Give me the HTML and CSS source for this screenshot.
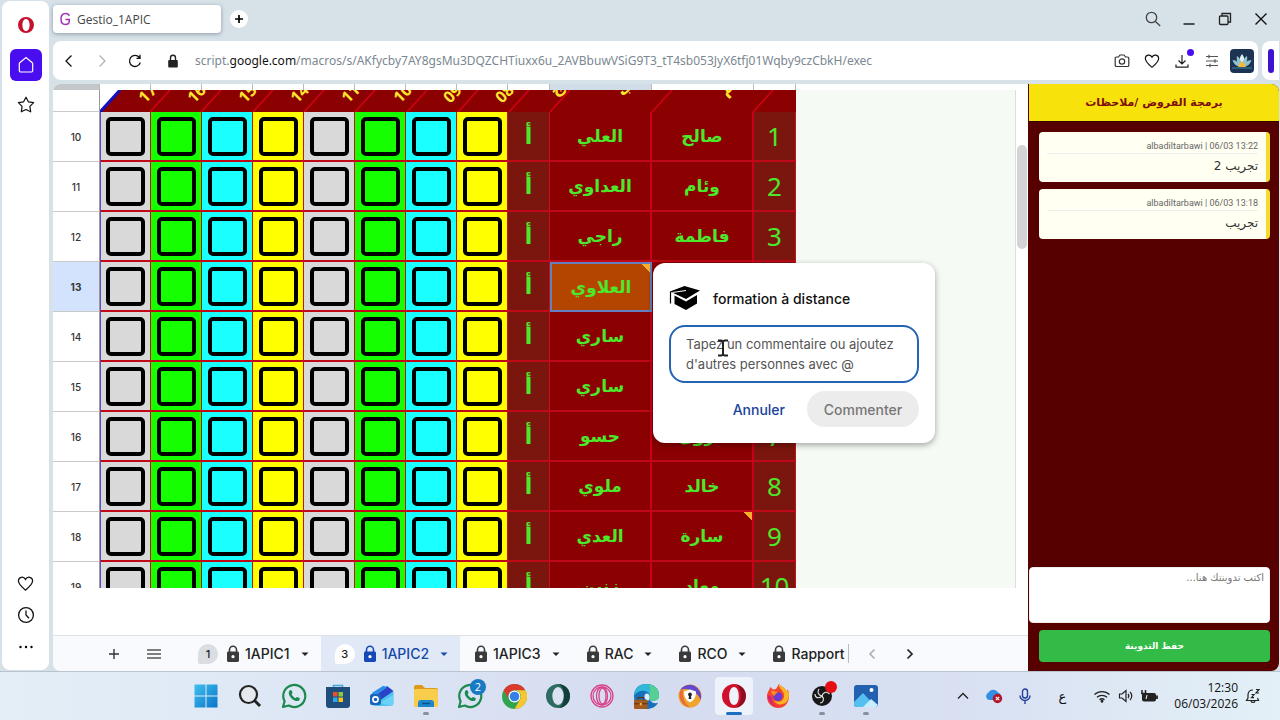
FILE: index.html
```html
<!DOCTYPE html>
<html lang="fr">
<head>
<meta charset="utf-8">
<title>Gestio_1APIC</title>
<link rel="stylesheet" href="styles.css">
</head>
<body>
<svg class="defs" aria-hidden="true">
  <symbol id="lock" viewBox="0 0 14 18"><path d="M3.500 7V4.800a3.500 3.500 0 0 1 7 0V7" fill="none" stroke="currentColor" stroke-width="1.600"/><rect x="1" y="6.500" width="12" height="10.500" rx="1.400" fill="currentColor"/><circle cx="7" cy="11.700" r="1.600" fill="#fff"/></symbol>
  <symbol id="caret" viewBox="0 0 10 10"><path d="M1.500 3.500h7L5 7z" fill="currentColor"/></symbol>
  <symbol id="heart" viewBox="0 0 18 18"><path d="M9 16C6 13.500 1.500 10 1.500 6.200 1.500 2 7 .8 9 4.700 11 .8 16.500 2 16.500 6.200 16.500 10 12 13.500 9 16z" fill="none" stroke="currentColor" stroke-width="1.300"/></symbol>
  <symbol id="whatsapp" viewBox="0 0 26 26"><path d="M2 24l1.600-5.800A11 11 0 1 1 7.800 22.500z" fill="none" stroke="#1c8a50" stroke-width="2.200" stroke-linejoin="round"/><path d="M8.600 7.500c.8-.9 1.700-.8 2.100.2l.8 1.900c.2.500-.9 1.500-.8 1.900.7 1.500 2.100 2.900 3.600 3.500.6.100 1.300-1.300 1.900-1.100l2.200 1.100c.8.400.3 1.800-.3 2.400-1.500 1.300-4 .7-6.300-1-3-2.200-5.400-6.200-3.200-8.900z" fill="#1c8a50"/></symbol>
</svg>

<div class="desktop">
<div class="browser">
  <nav class="rail" aria-label="Opera">
    <div class="rail-group">
      <button class="rail-btn" aria-label="Opera"><svg width="18" height="18" viewBox="0 0 18 18"><path fill-rule="evenodd" fill="#c8102e" d="M9 1a8 8 0 1 0 0 16A8 8 0 0 0 9 1zm0 2c2.200 0 3.600 2.600 3.600 6S11.200 15 9 15 5.400 12.400 5.400 9 6.800 3 9 3z"/></svg></button>
      <button class="rail-btn home" aria-label="Accueil"><svg width="18" height="18" viewBox="0 0 18 18"><path d="M9 1.500l6.300 5.200a1 1 0 0 1 .4.800v7a1.500 1.500 0 0 1-1.500 1.500H3.800a1.500 1.500 0 0 1-1.500-1.500v-7a1 1 0 0 1 .4-.8z" fill="none" stroke="#fff" stroke-width="1.200"/></svg></button>
      <button class="rail-btn" aria-label="Favoris"><svg width="18" height="18" viewBox="0 0 18 18"><path d="M9 1.200l2.400 4.600 5.200.9-3.700 3.700.8 5.400L9 13.500l-4.700 2.300.8-5.400L1.400 6.700l5.200-.9z" fill="none" stroke="#111" stroke-width="1.200" stroke-linejoin="round"/></svg></button>
    </div>
    <div class="rail-group">
      <button class="rail-btn" aria-label="Cœur"><svg width="17" height="17"><use href="#heart"/></svg></button>
      <button class="rail-btn" aria-label="Historique"><svg width="18" height="18" viewBox="0 0 18 18" fill="none" stroke="#111" stroke-width="1.300"><circle cx="9" cy="9" r="7.400"/><path d="M9 4.500V9l3 3.200"/></svg></button>
      <button class="rail-btn" aria-label="Plus"><svg width="16" height="6" viewBox="0 0 16 6"><circle cx="2.500" cy="3" r="1.200"/><circle cx="8" cy="3" r="1.200"/><circle cx="13.500" cy="3" r="1.200"/></svg></button>
    </div>
  </nav>

  <div class="window">
    <header class="tabstrip">
      <button class="tab"><svg width="12" height="14" viewBox="0 0 12 14"><path d="M10.300 3.800C9.800 2.200 8.300 1.500 6.500 1.500 3.800 1.500 2 3.300 2 7s1.800 5.500 4.300 5.500c2.600 0 4-1.300 4-3.500V7.500H6.500" fill="none" stroke="#a035b5" stroke-width="1.500"/></svg><span>Gestio_1APIC</span></button>
      <button class="newtab" aria-label="Nouvel onglet"><svg width="10" height="10" viewBox="0 0 10 10"><path d="M5 1v8M1 5h8" stroke="#000" stroke-width="1.700"/></svg></button>
      <div class="winbtns">
        <button aria-label="Rechercher"><svg width="16" height="16" viewBox="0 0 16 16" fill="none" stroke="#444" stroke-width="1.300"><circle cx="6.500" cy="6.500" r="5.200"/><path d="M10.500 10.500l4.700 4.500"/></svg></button>
        <button aria-label="Réduire"><svg width="14" height="14" viewBox="0 0 14 14"><path d="M1.500 12h11" stroke="#111" stroke-width="1.400"/></svg></button>
        <button aria-label="Restaurer"><svg width="14" height="14" viewBox="0 0 14 14" fill="none" stroke="#222" stroke-width="1.300"><rect x="1.500" y="4" width="8.500" height="8.500" rx="1"/><path d="M4 4V1.500h8.500V10H10"/></svg></button>
        <button aria-label="Fermer"><svg width="14" height="14" viewBox="0 0 14 14"><path d="M1.500 1.500l11 11M12.500 1.500l-11 11" stroke="#111" stroke-width="1.400"/></svg></button>
      </div>
    </header>

    <div class="toolbar">
      <div class="address">
        <button aria-label="Précédent"><svg width="14" height="14" viewBox="0 0 14 14"><path d="M9.500 1.500L4 7l5.500 5.500" fill="none" stroke="#111" stroke-width="1.300"/></svg></button>
        <button aria-label="Suivant"><svg width="14" height="14" viewBox="0 0 14 14"><path d="M4.500 1.500L10 7l-5.500 5.500" fill="none" stroke="#b0b0b0" stroke-width="1.200"/></svg></button>
        <button aria-label="Actualiser"><svg width="14" height="14" viewBox="0 0 14 14"><path d="M12.300 8.500A5.500 5.500 0 1 1 11.300 3.500M12 .8v3.600H8.500" fill="none" stroke="#111" stroke-width="1.300"/></svg></button>
        <svg class="secure" width="12" height="14" viewBox="0 0 12 14"><path d="M3.500 6V3.800a2.500 2.500 0 0 1 5 0V6" fill="none" stroke="#222" stroke-width="1.400"/><rect x="1.200" y="6" width="9.600" height="7.500" rx="1" fill="#222"/></svg>
        <span class="url">script.<b>google.com</b>/macros/s/AKfycby7AY8gsMu3DQZCHTiuxx6u_2AVBbuwVSiG9T3_tT4sb053JyX6tfj01Wqby9czCbkH/exec</span>
        <button aria-label="Capture"><svg width="16" height="16" viewBox="0 0 16 16" fill="none" stroke="#333" stroke-width="1.200"><path d="M2.500 4h2L6 2h4l1.500 2h2a1.300 1.300 0 0 1 1.300 1.300v6.900a1.300 1.300 0 0 1-1.300 1.300h-11a1.300 1.300 0 0 1-1.300-1.300V5.300A1.300 1.300 0 0 1 2.500 4z"/><circle cx="8" cy="8.500" r="2.700"/></svg></button>
        <button aria-label="Aimer"><svg width="16" height="16"><use href="#heart"/></svg></button>
        <button class="download" aria-label="Téléchargements"><svg width="14" height="14" viewBox="0 0 14 14" fill="none" stroke="#222" stroke-width="1.200"><path d="M7 1v8.500M3.500 6.500L7 10l3.500-3.500M1 10.500v2.700h12v-2.700"/></svg></button>
        <button aria-label="Réglages"><svg width="14" height="14" viewBox="0 0 14 14" stroke="#555" stroke-width="1.200"><path d="M1 2.500h12M1 7h12M1 11.500h12M4 .8v3.400M10 5.300v3.400M5 9.800v3.400"/></svg></button>
        <button aria-label="Profil"><svg width="24" height="24" viewBox="0 0 24 24"><rect width="24" height="24" rx="4" fill="#1d3354"/><path d="M12 5c3 4 3 7 0 12-3-5-3-8 0-12z" fill="#dff0f5"/><path d="M7 7c3 2 5 6 5 11-4-2-6-6-5-11zM17 7c-3 2-5 6-5 11 4-2 6-6 5-11z" fill="#8fc3cf"/><path d="M2.500 11c4 0 7 3 9.500 7-4 0-8-2-9.500-7zM21.500 11c-4 0-7 3-9.500 7 4 0 8-2 9.500-7z" fill="#8fc3d0"/><path d="M12 12c2 2 3 3 4 6H8c1-3 2-4 4-6z" fill="#f0b83c"/><path d="M2 19h20" stroke="#3f86a0"/></svg></button>
      </div>
      <div class="handle"><span></span></div>
    </div>

    <div class="page">
      <main class="sheet">
        <div class="viewport">
          <table class="grid">
            <colgroup><col class="c-num"><col class="c-box" span="8"><col class="c-grp"><col class="c-name" span="2"><col class="c-idx"></colgroup>
            <thead>
              <tr class="letters"><th class="corner"></th><th></th><th></th><th></th><th></th><th></th><th></th><th></th><th></th><th></th><th class="on"></th><th></th><th></th></tr>
              <tr class="hours"><th class="rownum"></th><th colspan="12">
                <svg width="696" height="22" viewBox="0 0 696 22">
                  <path d="M0 22L20 0H696V22z" fill="#8b0000"/>
                  <path d="M0 22L20 0" stroke="#1010c8" stroke-width="3"/>
                  <path d="M50 22l20-22M101 22l20-22M153 22l20-22M204 22l20-22M255 22l20-22M307 22l20-22M358 22l20-22M409 22l20-22M450 22l20-22M552 22l20-22M653 22l20-22" stroke="#d40018" stroke-width="1.500"/>
                  <g class="slant">
                    <text transform="translate(45 14) rotate(-45)">17</text>
                    <text transform="translate(94 14) rotate(-45)">16</text>
                    <text transform="translate(145 14) rotate(-45)">15</text>
                    <text transform="translate(197 14) rotate(-45)">14</text>
                    <text transform="translate(248 14) rotate(-45)">11</text>
                    <text transform="translate(300 14) rotate(-45)">10</text>
                    <text transform="translate(350 14) rotate(-45)">09</text>
                    <text transform="translate(402 14) rotate(-45)">08</text>
                    <text transform="translate(456 7) rotate(-45)">ج</text>
                    <text transform="translate(523 7) rotate(-45)">ب</text>
                    <text transform="translate(626 7) rotate(-45)">م</text>
                  </g>
                </svg></th></tr>
            </thead>
            <tbody id="rows"></tbody>
          </table>
          <div class="blank"></div>
          <div class="scroll"><span></span></div>
        </div>
        <footer class="sheetbar">
          <button class="tool" aria-label="Ajouter une feuille"><svg width="12" height="12" viewBox="0 0 12 12"><path d="M6 1v10M1 6h10" stroke="#333" stroke-width="1.400"/></svg></button>
          <button class="tool" aria-label="Toutes les feuilles"><svg width="14" height="12" viewBox="0 0 14 12"><path d="M0 2h14M0 6h14M0 10h14" stroke="#555" stroke-width="1.500"/></svg></button>
          <div class="sheets">
            <button><span class="count">1</span><svg class="lk"><use href="#lock"/></svg>1APIC1<svg class="ct"><use href="#caret"/></svg></button>
            <button class="active"><span class="count">3</span><svg class="lk"><use href="#lock"/></svg>1APIC2<svg class="ct"><use href="#caret"/></svg></button>
            <button><svg class="lk"><use href="#lock"/></svg>1APIC3<svg class="ct"><use href="#caret"/></svg></button>
            <button><svg class="lk"><use href="#lock"/></svg>RAC<svg class="ct"><use href="#caret"/></svg></button>
            <button><svg class="lk"><use href="#lock"/></svg>RCO<svg class="ct"><use href="#caret"/></svg></button>
            <button class="last"><svg class="lk"><use href="#lock"/></svg>Rapport</button>
          </div>
          <div class="pager">
            <button aria-label="Feuilles précédentes"><svg width="10" height="12" viewBox="0 0 10 12"><path d="M7.500 1.500L3 6l4.500 4.500" fill="none" stroke="#aaa" stroke-width="1.500"/></svg></button>
            <button aria-label="Feuilles suivantes"><svg width="10" height="12" viewBox="0 0 10 12"><path d="M2.500 1.500L7 6l-4.500 4.500" fill="none" stroke="#222" stroke-width="1.700"/></svg></button>
          </div>
        </footer>

        <form class="comment">
          <div class="who"><svg width="32" height="26" viewBox="0 0 32 26"><path d="M1 6.500L15.500 1 31 5.500 17 14z"/><path d="M5.500 10.500l11.500 6L28 10v8.500L17 25 5.500 19z"/><path d="M17 5.500L3.500 7.500" stroke="#fff"/><path d="M1.500 6.500v12" stroke="#000" stroke-width="1.200"/></svg><label for="msg">formation à distance</label></div>
          <textarea id="msg" rows="2" placeholder="Tapez un commentaire ou ajoutez d'autres personnes avec @"></textarea>
          <div class="actions"><button type="button" class="cancel">Annuler</button><button type="button" class="send" disabled>Commenter</button></div>
          <svg class="cursor" width="12" height="18" viewBox="0 0 12 18"><path d="M1 1.500h3.500L6 2.500l1.500-1H11M6 2v14M1 16.500h3.500l1.500-1 1.500 1H11" fill="none" stroke="#222" stroke-width="2"/></svg>
        </form>
      </main>

      <aside class="notes" dir="rtl" lang="ar">
        <h1>برمجة الفروض /ملاحظات</h1>
        <div class="list">
          <article><p class="meta" dir="ltr">albadiltarbawi | 06/03 13:22</p><p class="body">تجريب 2</p></article>
          <article><p class="meta" dir="ltr">albadiltarbawi | 06/03 13:18</p><p class="body">تجريب</p></article>
        </div>
        <textarea aria-label="تدوينة" placeholder="اكتب تدوينتك هنا..."></textarea>
        <button class="save">حفظ التدوينة</button>
      </aside>
    </div>
  </div>
</div>

<footer class="taskbar">
  <nav class="apps" aria-label="Applications">
    <button aria-label="Démarrer"><svg width="24" height="24" viewBox="0 0 24 24"><defs><linearGradient id="win" x2="1" y2="1"><stop stop-color="#3fc0f0"/><stop offset="1" stop-color="#0a74c8"/></linearGradient></defs><path d="M.500.500h11v11H.500zM12.500.500h11v11h-11zM.500 12.500h11v11H.500zM12.500 12.500h11v11h-11z" fill="url(#win)"/></svg></button>
    <button aria-label="Recherche"><svg width="24" height="24" viewBox="0 0 24 24" fill="none" stroke="#222"><circle cx="10.500" cy="10.500" r="8.500" stroke-width="2.200" fill="#e4e9f0"/><path d="M16.500 16.500l5.500 5.500" stroke-width="3"/></svg></button>
    <button aria-label="WhatsApp"><svg width="26" height="26"><use href="#whatsapp"/></svg></button>
    <button aria-label="Store"><svg width="24" height="24" viewBox="0 0 24 24"><path d="M7.500 4V1.500h9V4" fill="none" stroke="#3aa7dd" stroke-width="1.500"/><path d="M0 3h24v18a3 3 0 0 1-3 3H3a3 3 0 0 1-3-3z" fill="#1f4e7c"/><path d="M7 8h4.500v4.500H7z" fill="#e8502e"/><path d="M12.500 8H17v4.500h-4.500z" fill="#8cc63f"/><path d="M7 13.500h4.500V18H7z" fill="#2aa9e8"/><path d="M12.500 13.500H17V18h-4.500z" fill="#fbc31b"/></svg></button>
    <button aria-label="Outlook"><svg width="24" height="24" viewBox="0 0 24 24"><path d="M2 9L14 1.500 23.500 8v11a3 3 0 0 1-3 3H5a3 3 0 0 1-3-3z" fill="#4cc2ee"/><path d="M8 9L17 2l6.500 5-13 9z" fill="#2b42c8"/><path d="M2 9l11-7 4 1.500L5 12z" fill="#2f8de8"/><path d="M10 19l13-8v8.500a2.500 2.500 0 0 1-2.500 2.500z" fill="#6ad3f7"/><rect y="10" width="11" height="11" rx="2" fill="#1764b8"/><circle cx="5.500" cy="15.500" r="2.600" fill="none" stroke="#fff" stroke-width="1.600"/></svg></button>
    <button class="run" aria-label="Explorateur"><svg width="26" height="24" viewBox="0 0 26 24"><path d="M1 3a2 2 0 0 1 2-2h6l3 3h11a2 2 0 0 1 2 2v4H1z" fill="#dc9a1a"/><rect x="1" y="5" width="24" height="18" rx="1.500" fill="#f8cd4c"/><path d="M5 23v-4a3 3 0 0 1 3-3h10a3 3 0 0 1 3 3v4z" fill="#1f86cc"/><path d="M9 19.500h8" stroke="#0b528a" stroke-width="1.500"/></svg></button>
    <button aria-label="WhatsApp, 2"><svg width="26" height="26"><use href="#whatsapp"/></svg><span class="badge">2</span></button>
    <button aria-label="Chrome"><svg width="25" height="25" viewBox="0 0 24 24"><circle cx="12" cy="12" r="12" fill="#2fa44f"/><path d="M1.600 6A12 12 0 0 1 22.400 6H12a6 6 0 0 0-5.200 9z" fill="#dc3a2e"/><path d="M22.400 6A12 12 0 0 1 12 24l5.200-9A6 6 0 0 0 12 6z" fill="#f9c62c"/><circle cx="12" cy="12" r="5.700" fill="#fff"/><circle cx="12" cy="12" r="4.600" fill="#347fe8"/></svg></button>
    <button aria-label="Opera Air"><svg width="24" height="24" viewBox="0 0 24 24"><circle cx="12" cy="12" r="12" fill="#2e6b61"/><path d="M12 0a12 12 0 0 1 0 24c4-1 6-6 6-12S16 1 12 0z" fill="#143e3b"/><ellipse cx="12" cy="12" rx="5.700" ry="9" fill="#dce2f2"/></svg></button>
    <button aria-label="Opera GX"><svg width="24" height="24" viewBox="0 0 24 24" fill="none" stroke="#d8438c" stroke-width="1.300"><circle cx="12" cy="12" r="11"/><circle cx="12" cy="12" r="9"/><ellipse cx="12" cy="12" rx="5.500" ry="9"/><ellipse cx="12.500" cy="12" rx="3.500" ry="8"/></svg></button>
    <button aria-label="Edge"><svg width="25" height="25" viewBox="0 0 24 24"><path d="M0 12C0 4 5 0 12 0c8 0 12 5 12 11 0 5-6 6-9 4 2 3 5 4 8 3-2 4-6 6-11 6C5 24 0 19 0 12z" fill="#1670bd"/><path d="M0 11C1 3 6 0 12 0c8 0 12 5 12 11 0 5-6 6-9 4-.8-1 1-2 0-5C13 5 4 5 0 11z" fill="#32b7d8"/><path d="M14 .2C20 1 24 5 24 11c0 5-6 6-9 4-.8-1 1-2 0-5 0-3 2-6-1-9.800z" fill="#55cf92"/><path d="M12 9c2 0 3 1.500 3 3.500s-1 2.500-1 3.500c-2 0-4-1.500-4-4 0-1.500 1-3 2-3z" fill="#e3ecf6"/><rect y="15" width="13" height="9" rx="1" fill="#a25a1e"/><path d="M4 15v-2h5v2M0 19h13" fill="none" stroke="#5f3008"/><path d="M5.500 18h2v2.500h-2z" fill="#f5b04d"/></svg></button>
    <button aria-label="Navigateur privé"><svg width="24" height="24" viewBox="0 0 24 24"><circle cx="12" cy="12" r="11.500" fill="#f0a42b"/><path d="M2 6A11.500 11.500 0 0 1 22.500 16C20 8 10 3 2 6z" fill="#6547cf"/><path d="M2 7C0 14 4 22 12 23.500 7 20 4 14 5 6z" fill="#e96a3c"/><path d="M12 5.500l6 2c0 5-1.500 8.500-6 11-4.500-2.500-6-6-6-11z" fill="#fff"/><circle cx="12" cy="10.500" r="1.900" fill="#222"/><path d="M11.200 11h1.600l.6 4h-2.800z" fill="#222"/></svg></button>
    <button class="run current" aria-label="Opera"><svg width="24" height="24" viewBox="0 0 24 24"><path fill-rule="evenodd" fill="#d0112b" d="M12 0a12 12 0 1 0 0 24 12 12 0 0 0 0-24zm0 3c3 0 4.800 4 4.800 9s-1.800 9-4.800 9-4.800-4-4.800-9S9 3 12 3z"/><path d="M14 .2a12 12 0 0 1 0 23.600c3-2 5-6 5-11.800s-2-9.800-5-11.800z" fill="#8c0d22"/></svg></button>
    <button aria-label="Firefox"><svg width="24" height="24" viewBox="0 0 24 24"><path d="M3 6l1.500-3L7 5.500 10 5l3-5c2 3 6 3 7 7l2-1c3 7 0 18-10 18C3 24-2 14 3 6z" fill="#f4442f"/><path d="M13 0c-1 5 6 6 5 13-1 5-7 6-10 3 2 7 15 6 15-5 0-5-4-5-5-7-1-1-4-2-5-4z" fill="#fbb522"/><path d="M1.500 11c1 8 6 12 12 12-6-1-8-5-8-10z" fill="#d51d7d"/><circle cx="11.800" cy="12.500" r="4.500" fill="#6c3bd1"/><path d="M5 7c3-1 5 1 7 1-1 2-3 1-3 4-2-1-4-2-4-5z" fill="#fb8b24"/></svg></button>
    <button class="run" aria-label="OBS Studio"><svg width="20" height="20" viewBox="0 0 20 20"><circle cx="10" cy="10" r="10" fill="#181818"/><g fill="none" stroke="#ddd" stroke-width="1.200"><path d="M10 10C6 9 5 6 7 3M10 10c1-4 5-5 7.500-2M10 10c3 3 1 7-2 7M10 10c-3 3-7 2-7-2"/></g></svg><span class="rec"></span></button>
    <button class="run" aria-label="Photos"><svg width="24" height="24" viewBox="0 0 24 24"><rect y="1" width="24" height="22" rx="3" fill="#2161b0"/><path d="M0 18l9-9 13 14H3a3 3 0 0 1-3-3z" fill="#55bff0"/><path d="M9 23l8-8 7 6a3 3 0 0 1-3 2z" fill="#c8eefb"/><circle cx="17.500" cy="6" r="2" fill="#fff"/></svg></button>
  </nav>
  <div class="tray">
    <button aria-label="Icônes masquées"><svg width="12" height="8" viewBox="0 0 12 8"><path d="M1 6.500l5-5 5 5" fill="none" stroke="#222" stroke-width="1.300"/></svg></button>
    <button aria-label="OneDrive"><svg width="18" height="16" viewBox="0 0 18 16"><path d="M4 12a4 4 0 0 1-.5-7.500A5.500 5.500 0 0 1 13 4.500 4 4 0 0 1 14 12z" fill="#2f8fe6"/><circle cx="12.500" cy="10.500" r="4.700" fill="#b41427"/><path d="M10.800 8.800l3.400 3.400M14.200 8.800l-3.400 3.400" stroke="#fff" stroke-width="1.200"/></svg></button>
    <button aria-label="Micro"><svg width="12" height="17" viewBox="0 0 12 17" fill="none" stroke="#263f9b" stroke-width="1.400"><rect x="3.500" y="1" width="5" height="9" rx="2.500"/><path d="M1 7.500a5 5 0 0 0 10 0M6 12.500V16"/></svg></button>
    <span class="lang">ع</span>
    <button aria-label="Wi-Fi"><svg width="18" height="14" viewBox="0 0 18 14" fill="none" stroke="#222" stroke-width="1.300"><path d="M1.500 5.500a11 11 0 0 1 15 0M4 8.300a7.300 7.300 0 0 1 10 0M6.500 10.800a3.800 3.800 0 0 1 5 0"/><circle cx="9" cy="12.200" r=".8" fill="#222"/></svg></button>
    <button aria-label="Volume"><svg width="16" height="14" viewBox="0 0 16 14" fill="none" stroke="#222" stroke-width="1.200"><path d="M1.500 5h2.500l4-3.500v11L4 9H1.500zM10 5a3 3 0 0 1 0 4M12 3a5.500 5.500 0 0 1 0 8"/></svg></button>
    <button aria-label="Batterie"><svg width="18" height="14" viewBox="0 0 18 14"><rect x="1" y="4" width="14" height="8.500" rx="2" fill="#222"/><path d="M16 6.500v3.500" stroke="#222" stroke-width="1.800"/><path d="M1 1v3M4.500 1v3M0 4.500h6" stroke="#222" stroke-width="1.500"/><path d="M6 6l-1 4" stroke="#fff"/></svg></button>
    <div class="clock"><span>12:30</span><span>06/03/2026</span></div>
    <button aria-label="Notifications"><svg width="16" height="16" viewBox="0 0 16 16" fill="none" stroke="#222" stroke-width="1.200"><path d="M8 2C4.500 2 3 4 3 7v3l-1.500 2.500h12L12.500 10M6 13c.5 2 3.500 2 4 0M6.500 6.500H9l-2.500 3.200H9M11 1.500h3L11 5h3"/></svg></button>
  </div>
</footer>
</div>
<script src="app.js"></script>
</body>
</html>
```
FILE: styles.css
```css
* { box-sizing: border-box; }
body { margin: 0; font-family: "Open Sans", "Noto Sans", sans-serif; color: #111; }
button { border: 0; padding: 0; background: none; font: inherit; color: inherit; display: flex; align-items: center; justify-content: center; }
svg { display: block; flex: none; }
p, h1 { margin: 0; }
textarea { resize: none; }
.defs { position: absolute; width: 0; height: 0; }

.desktop { height: 100vh; display: flex; flex-direction: column; overflow: hidden; }
.browser { flex: 1; min-height: 0; display: flex; gap: 4px; padding: 0 1px 0 2px; background: #d6e1e8; border-bottom: 1px solid #b9c4d0; }

.rail { width: 47px; margin: 1px 0; padding: 8px 0 7px; display: flex; flex-direction: column; justify-content: space-between; background: #fff; border-radius: 8px; }
.rail-group { display: flex; flex-direction: column; align-items: center; gap: 8px; }
.rail-group + .rail-group { gap: 0; }
.rail-btn { width: 32px; height: 32px; }
.rail-btn.home { background: #4a0df0; border-radius: 6px; }

.window { flex: 1; min-width: 0; display: flex; flex-direction: column; }
.tabstrip { height: 41px; padding: 5px 8px 8px 0; display: flex; align-items: center; gap: 9px; }
.tab { width: 168px; height: 28px; padding: 0 6px; gap: 6px; justify-content: flex-start; background: #fff; border-radius: 4px; box-shadow: 0 1px 4px #8d9aa4; font-size: 12px; color: #444; }
.newtab { width: 18px; height: 18px; background: #fff; border-radius: 50%; }
.winbtns { margin-left: auto; display: flex; gap: 16px; }
.winbtns button { width: 20px; height: 20px; }

.toolbar { height: 39px; display: flex; gap: 4px; }
.address { flex: 1; min-width: 0; padding: 0 4px 0 6px; display: flex; align-items: center; gap: 10px; background: #fff; border-radius: 8px; }
.address button { width: 20px; height: 24px; }
.address button:nth-of-type(2), .address button:nth-of-type(3) { margin-left: 3px; }
.secure { margin: 0 6px 0 12px; }
.url { flex: 1; font-family: "Noto Sans", sans-serif; font-size: 12px; color: #7b8791; white-space: nowrap; overflow: hidden; }
.url b { font-weight: 400; color: #111; }
.address button:last-child { width: 24px; margin-left: -2px; }
.download { position: relative; }
.download::after { content: ""; position: absolute; top: 0; right: -2px; width: 7px; height: 7px; border-radius: 50%; background: #4a0df0; }
.handle { width: 17px; display: flex; align-items: center; justify-content: center; background: #fff; border-radius: 8px 0 0 8px; }
.handle span { width: 6px; height: 24px; border-radius: 3px; background: #3d12d0; }

.page { flex: 1; min-height: 0; margin-top: 4px; display: flex; background: #fff; border-radius: 8px; overflow: hidden; }
.sheet { flex: 1; min-width: 0; position: relative; display: flex; flex-direction: column; font-family: Inter, "DejaVu Sans", sans-serif; }
.viewport { flex: 1; min-height: 0; margin-bottom: 47px; display: flex; overflow: hidden; }
.blank { flex: 1; margin-top: 6px; background: #f5faf5; border-right: 1px solid #ddd; }
.scroll { width: 12px; padding-top: 61px; }
.scroll span { display: block; width: 10px; height: 104px; margin: 0 auto; border-radius: 5px; background: #d4d4d6; }

.grid { width: 743px; flex: none; table-layout: fixed; border-collapse: separate; border-spacing: 0; align-self: flex-start; }
.grid th, .grid td { padding: 0; overflow: hidden; }
.c-num { width: 47px; }
.c-box { width: 51px; }
.c-grp { width: 42px; }
.c-name { width: 102px; }
.c-idx { width: 42px; }
.letters th { height: 6px; border-right: 1px solid #bbb; background: #fff; }
.letters .corner { background: #c4c7c9; }
.letters .on { background: #d0dce8; }
.hours th { height: 22px; }
.rownum { border-right: 1px solid #999; border-bottom: 1px solid #c9c9c9; background: #fff; font-size: 10px; font-weight: 500; color: #333; text-align: center; }
.rownum.on { background: #d3e3fd; font-weight: 700; }
.slant { font: bold 16px "Open Sans", "DejaVu Sans", sans-serif; fill: #ffe62e; }
#rows tr { height: 50px; }
#rows td { border-right: 1px solid #c8101c; border-bottom: 2px solid #c00818; background: #8b0000; text-align: center; vertical-align: middle; }
#rows .gray { background: #d9d9d9; }
#rows .green { background: #15ff00; }
#rows .cyan { background: #1affff; }
#rows .yellow { background: #ffff00; }
#rows .gray:nth-child(2) { border-left: 1px solid #5a50d0; }
.grid input { appearance: none; display: block; width: 39px; height: 39px; margin: 0 auto; border: 4px solid #000; border-radius: 5px; }
#rows .grp, #rows .idx { background: #7b160e; }
.grp, .name { font: bold 17px "DejaVu Sans", sans-serif; color: #4be82c; }
.grp { font-size: 22px; }
#rows .name { border-right: 2px solid #c8001a; }
#rows .selected { background: #b44500; border: 2px solid #6580c0; }
.idx { font-family: "Noto Sans", sans-serif; font-size: 26px; color: #4be82c; }
.noted { background-image: linear-gradient(225deg, #f3ae2c 6px, transparent 6px) !important; }

.sheetbar { height: 36px; padding-left: 51px; display: flex; background: #f8fafd; border-top: 1px solid #dde2e6; font-size: 14px; font-weight: 500; color: #222; }
.tool { width: 20px; margin-right: 20px; }
.sheets { flex: none; display: flex; }
.sheets button { padding: 0 11px 0 14px; }
.sheets .active { background: #e1e9f7; color: #1649a8; }
.sheets .last { padding-right: 3px; border-right: 1px solid #bbb; margin: 8px 0; }
.lk { width: 14px; height: 18px; margin-right: 5px; color: #3a3a3a; }
.active .lk { color: #1649b8; }
.ct { width: 10px; height: 10px; margin-left: 10px; }
.count { width: 20px; height: 20px; margin-right: 8px; line-height: 20px; font-size: 11px; color: #222; background: #dadde1; border-radius: 50% 50% 50% 2px; }
.active .count { background: #fff; }
.pager { display: flex; margin-left: 13px; gap: 18px; }
.pager button { width: 20px; }

.comment { position: absolute; left: 600px; top: 179px; width: 282px; padding: 16px; background: #fff; border-radius: 12px; box-shadow: 0 2px 6px rgba(0, 0, 0, .35); font-size: 14px; }
.who { height: 38px; display: flex; align-items: center; gap: 12px; font-weight: 500; }
.comment textarea { display: block; width: 100%; height: 58px; margin: 8px 0; padding: 7px 15px; border: 2px solid #2563b5; border-radius: 16px; outline: 0; overflow: hidden; background: #fff; font: 13px/20px Inter, sans-serif; }
.comment textarea::placeholder { color: #555; }
.actions { display: flex; justify-content: flex-end; gap: 22px; font-weight: 500; }
.cancel { color: #17439b; }
.send { width: 112px; height: 36px; border-radius: 18px; background: #ececec; color: #777; }
.cursor { position: absolute; left: 64px; top: 76px; }

.notes { width: 251px; display: flex; flex-direction: column; background: #570000; border-left: 1px solid #570000; }
.notes h1 { height: 38px; text-align: center; background: #f8e20c; color: #7d0f0a; font: bold 11px/38px "DejaVu Sans", sans-serif; border-bottom: 1px solid #300; }
.list { flex: 1; padding: 10px 9px 10px 10px; display: flex; flex-direction: column; gap: 7px; }
.list article { height: 50px; padding: 8px 8px 0; background: #fffff2; border-right: 4px solid #f2dc2a; border-radius: 4px; }
.meta { font-family: Roboto, sans-serif; font-size: 9px; line-height: 13px; text-align: right; color: #666; border-bottom: 1px solid #eee; }
.body { font: 12px/24px "DejaVu Sans", sans-serif; color: #333; }
.notes textarea { width: 241px; height: 56px; margin: 0 9px 7px 0; padding: 2px 5px; border: 1px solid #eee; border-radius: 4px; background: #fff; font: 10px/16px "DejaVu Sans", sans-serif; }
.save { height: 32px; margin: 0 9px 9px 10px; border-radius: 4px; background: #33bb48; color: #fff; font: bold 9px "DejaVu Sans", sans-serif; }

.taskbar { height: 48px; padding: 0 19px 0 184px; display: flex; justify-content: space-between; background: linear-gradient(90deg, #e3eef6, #e0eaf6 15%, #d5dcf0 50%, #d8e0f2 75%, #e3f0f7); }
.apps { display: flex; }
.apps button { width: 44px; position: relative; }
.current::before { content: ""; position: absolute; inset: 5px 3px; background: #eef2fa; border-radius: 4px; }
.current svg { position: relative; }
.run::after { content: ""; position: absolute; bottom: 5px; left: 19px; width: 6px; height: 3px; border-radius: 2px; background: #8a90a0; }
.current::after { left: 14px; width: 16px; background: #1c6fc0; }
.badge { position: absolute; top: 7px; right: 6px; width: 16px; height: 16px; border-radius: 50%; background: #1879c4; color: #fff; font-size: 11px; line-height: 16px; }
.rec { position: absolute; top: 9px; right: 7px; width: 12px; height: 12px; border-radius: 50%; background: #e80f14; }
.tray { display: flex; align-items: center; gap: 7px; }
.tray button:nth-of-type(-n+3) { margin-right: 9px; }
.lang { margin: 0 20px 0 12px; font: 13px "DejaVu Sans", sans-serif; }
.clock { display: flex; flex-direction: column; align-items: flex-end; margin-left: 8px; font-size: 12px; line-height: 16px; }
```
FILE: app.js
```js
// Roster rows: first name, family name. Empty names belong to unfilled places.
const roster = [
  ["صالح", "العلي"],
  ["وئام", "العداوي"],
  ["فاطمة", "راجي"],
  ["", "العلاوي"],
  ["", "ساري"],
  ["", "ساري"],
  ["مروى", "حسو"],
  ["خالد", "ملوي"],
  ["سارة", "العدي"],
  ["معاد", "زنين"]
];
const hours = [17, 16, 15, 14, 11, 10, 9, 8];
const colours = ["gray", "green", "cyan", "yellow"];
const selectedRow = 3;
const notedRow = 8;

document.getElementById("rows").innerHTML = roster.map(([first, family], i) => {
  const boxes = hours.map((h, c) =>
    `<td class="${colours[c % 4]}"><input type="checkbox" aria-label="${i + 1}, ${h}h"></td>`).join("");
  const on = i === selectedRow;
  return `<tr><th class="rownum${on ? " on" : ""}">${i + 10}</th>${boxes}` +
    `<td class="grp">أ</td><td class="name${on ? " selected noted" : ""}">${family}</td>` +
    `<td class="name${i === notedRow ? " noted" : ""}">${first}</td><td class="idx">${i + 1}</td></tr>`;
}).join("");
```
